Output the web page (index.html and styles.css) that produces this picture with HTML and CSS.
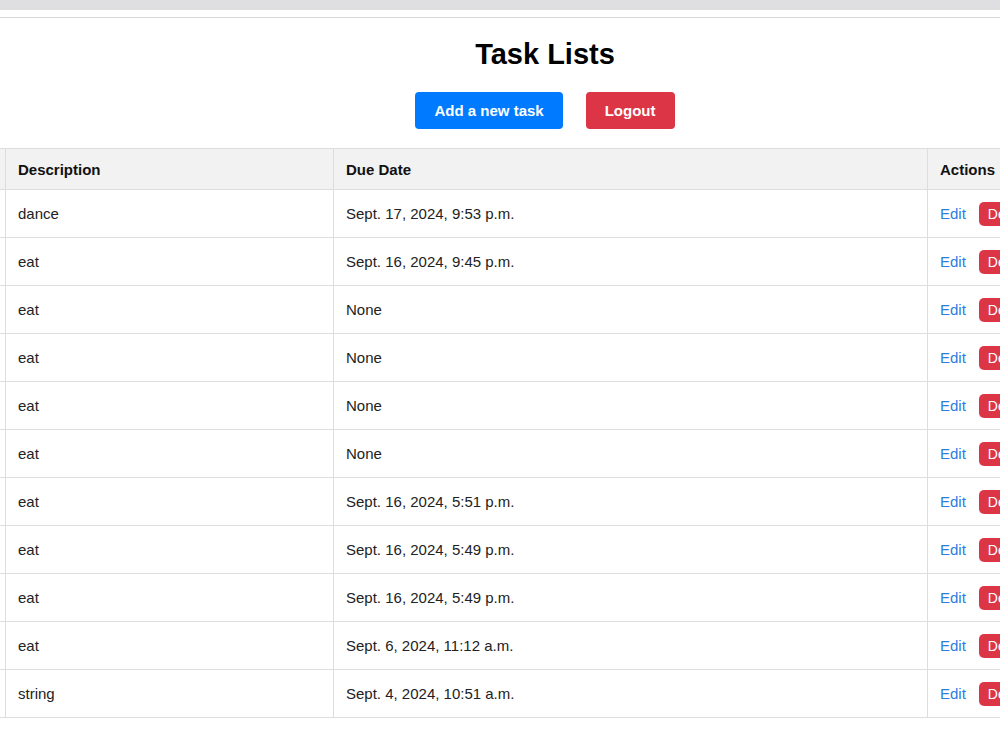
FILE: index.html
```html
<!DOCTYPE html>
<html lang="en">
<head>
  <meta charset="UTF-8">
  <title>Task Lists</title>
  <meta name="viewport" content="width=device-width, initial-scale=1.0">
  <link rel="stylesheet" href="styles.css">
</head>
<body>
  <!-- Browser-ish top strip and rule -->
  <div class="topbar"></div>
  <div class="rule"></div>

  <!-- Page is wider than the window; view is scrolled to the right -->
  <div class="page">
    <h1 class="title">Task Lists</h1>
    <div class="toolbar">
      <a class="btn btn-primary" href="#">Add a new task</a>
      <a class="btn btn-danger" href="#">Logout</a>
    </div>

    <table class="tasks">
      <colgroup>
        <col class="col-title">
        <col class="col-desc">
        <col class="col-due">
        <col class="col-actions">
      </colgroup>
      <thead>
        <tr>
          <th></th>
          <th>Description</th>
          <th>Due Date</th>
          <th>Actions</th>
        </tr>
      </thead>
      <tbody>
        <tr><td></td><td>dance</td><td>Sept. 17, 2024, 9:53 p.m.</td><td><div class="actions"><a class="edit" href="#">Edit</a><a class="btn-delete" href="#">Delete</a></div></td></tr>
        <tr><td></td><td>eat</td><td>Sept. 16, 2024, 9:45 p.m.</td><td><div class="actions"><a class="edit" href="#">Edit</a><a class="btn-delete" href="#">Delete</a></div></td></tr>
        <tr><td></td><td>eat</td><td>None</td><td><div class="actions"><a class="edit" href="#">Edit</a><a class="btn-delete" href="#">Delete</a></div></td></tr>
        <tr><td></td><td>eat</td><td>None</td><td><div class="actions"><a class="edit" href="#">Edit</a><a class="btn-delete" href="#">Delete</a></div></td></tr>
        <tr><td></td><td>eat</td><td>None</td><td><div class="actions"><a class="edit" href="#">Edit</a><a class="btn-delete" href="#">Delete</a></div></td></tr>
        <tr><td></td><td>eat</td><td>None</td><td><div class="actions"><a class="edit" href="#">Edit</a><a class="btn-delete" href="#">Delete</a></div></td></tr>
        <tr><td></td><td>eat</td><td>Sept. 16, 2024, 5:51 p.m.</td><td><div class="actions"><a class="edit" href="#">Edit</a><a class="btn-delete" href="#">Delete</a></div></td></tr>
        <tr><td></td><td>eat</td><td>Sept. 16, 2024, 5:49 p.m.</td><td><div class="actions"><a class="edit" href="#">Edit</a><a class="btn-delete" href="#">Delete</a></div></td></tr>
        <tr><td></td><td>eat</td><td>Sept. 16, 2024, 5:49 p.m.</td><td><div class="actions"><a class="edit" href="#">Edit</a><a class="btn-delete" href="#">Delete</a></div></td></tr>
        <tr><td></td><td>eat</td><td>Sept. 6, 2024, 11:12 a.m.</td><td><div class="actions"><a class="edit" href="#">Edit</a><a class="btn-delete" href="#">Delete</a></div></td></tr>
        <tr><td></td><td>string</td><td>Sept. 4, 2024, 10:51 a.m.</td><td><div class="actions"><a class="edit" href="#">Edit</a><a class="btn-delete" href="#">Delete</a></div></td></tr>
      </tbody>
    </table>
  </div>
</body>
</html>
```

FILE: styles.css
```css
/* Base */
body {
  margin: 0;
  padding: 0;
  font-family: "Liberation Sans", Arial, sans-serif;
  font-size: 15px;
  color: #222;
  background: #fff;
  overflow: hidden;
}

a {
  text-decoration: none;
}

/* Top strip */
.topbar {
  height: 10px;
  background: #dfdfe2;
}
.rule {
  margin-top: 7px;
  height: 1px;
  background: #d6d6d6;
}

/* Wide page, scrolled horizontally */
.page {
  width: 1390px;
  margin-left: -150px;
}

.title {
  margin: 19px 0 0;
  font-size: 29px;
  line-height: 34px;
  font-weight: bold;
  color: #000;
  text-align: center;
}

/* Buttons */
.toolbar {
  display: flex;
  justify-content: center;
  gap: 23px;
  margin-top: 21px;
}
.btn {
  display: inline-block;
  padding: 10px 19px;
  font-size: 15px;
  line-height: 17px;
  font-weight: bold;
  color: #fff;
  border-radius: 4px;
}
.btn-primary {
  background: #007bff;
}
.btn-danger {
  background: #dc3545;
}

/* Task table */
.tasks {
  margin-top: 19px;
  width: 100%;
  table-layout: fixed;
  border-collapse: collapse;
}
.col-title { width: 155px; }
.col-desc { width: 328px; }
.col-due { width: 594px; }

.tasks th,
.tasks td {
  border: 1px solid #dddddd;
  padding: 0 12px;
  text-align: left;
  line-height: 17px;
  white-space: nowrap;
  overflow: hidden;
}
.tasks thead tr {
  height: 41px;
}
.tasks th {
  background: #f2f2f2;
  font-weight: bold;
  color: #111;
}
.tasks tbody tr {
  height: 48px;
}
.tasks td {
  color: #222;
}

.actions {
  display: flex;
  align-items: center;
  gap: 13px;
}
.edit {
  color: #2b7de0;
}
.btn-delete {
  display: inline-block;
  padding: 4px 9px;
  font-size: 14px;
  line-height: 16px;
  color: #fff;
  background: #dc3545;
  border-radius: 5px;
}
```
